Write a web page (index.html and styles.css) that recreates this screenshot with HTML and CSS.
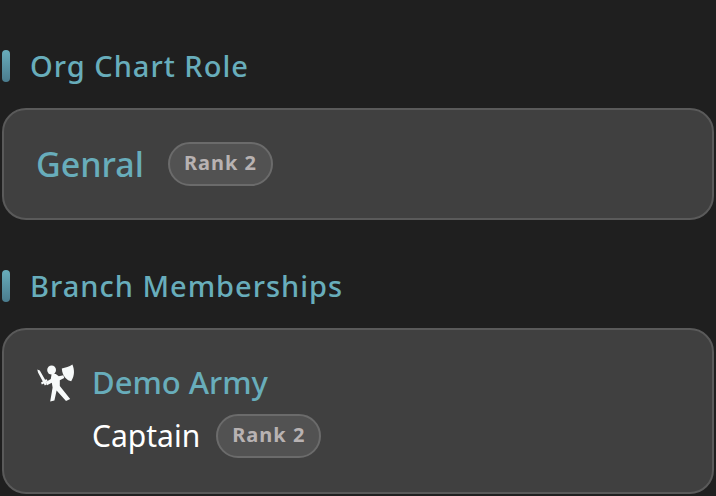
FILE: index.html
```
<!DOCTYPE html>
<html lang="en">
<head>
<meta charset="utf-8">
<meta name="viewport" content="width=device-width, initial-scale=1">
<title>Org Chart Role</title>
<link rel="stylesheet" href="styles.css">
</head>
<body>
<main class="profile">
  <section class="section">
    <h2 class="section-title">Org Chart Role</h2>
    <div class="card">
      <div class="role">
        <span class="role-name">Genral</span>
        <span class="rank">Rank 2</span>
      </div>
    </div>
  </section>
  <section class="section">
    <h2 class="section-title">Branch Memberships</h2>
    <div class="card branch">
      <svg class="branch-icon" viewBox="0 0 40 40" aria-hidden="true">
        <ellipse cx="15.6" cy="8" rx="4.4" ry="4.6"/>
        <path d="M1.3 7.4 3.8 8.6 9.1 17.8 10.8 17.2 11.6 19 9.8 20.2 10.8 22.2 8.8 23.4 7.8 21.6 5.8 22.4 5 20.6 6.8 19.4 2 10.4Z"/>
        <path d="M9.8 20 14.8 17 15.6 12 19.8 12 22.8 14.2 27.4 13.2 28.2 16 23.8 18.2 23.8 24 34.2 37 30 39 20.6 28.6 18.4 38.6 14.2 39.6 16.6 25.6 15.8 20.8 11 23.2Z"/>
        <path d="M25.8 6.4C29.6 6 33.2 4.8 36.4 2.6 38.6 8 38.8 13.6 35.2 19.2 31.4 18.4 26.4 14.8 25.8 6.4Z"/>
      </svg>
      <div class="branch-info">
        <h3 class="branch-name">Demo Army</h3>
        <div class="branch-role">
          <span class="branch-title">Captain</span>
          <span class="rank">Rank 2</span>
        </div>
      </div>
    </div>
  </section>
</main>
</body>
</html>
```
FILE: styles.css
```
* { box-sizing: border-box; }

body {
  margin: 0;
  background: #1f1f1f;
  color: #fff;
  font-family: "Segoe UI", "Noto Sans", "Open Sans", sans-serif;
}

.profile { padding: 48px 2px 2px; }

.section + .section { margin-top: 48px; }

.section-title {
  display: flex;
  align-items: center;
  gap: 20px;
  margin: 0 0 24px;
  color: #68adbb;
  font-size: 29px;
  font-weight: 500;
  line-height: 36px;
  letter-spacing: 1px;
}

.section-title::before {
  content: "";
  width: 8px;
  height: 32px;
  border-radius: 4px;
  background: linear-gradient(#68adbb, #4a7c8e);
}

.card {
  padding: 32px;
  border: 2px solid #5a5a5a;
  border-radius: 24px;
  background: #404040;
}

.role,
.branch-role {
  display: flex;
  align-items: center;
}

.role {
  gap: 24px;
}

.branch-role {
  gap: 16px;
}

.role-name {
  color: #68adbb;
  font-size: 34px;
  font-weight: 500;
  line-height: 42px;
}

.rank {
  padding: 0 14px 2px;
  border: 2px solid #6b6b6b;
  border-radius: 22px;
  background: #525252;
  color: #b8b2b2;
  font-size: 20px;
  font-weight: 700;
  line-height: 38px;
  letter-spacing: 1px;
}

.branch {
  display: flex;
  align-items: flex-start;
  gap: 16px;
}

.branch-icon {
  width: 40px;
  height: 40px;
  fill: #f7fafa;
}

.branch-info {
  padding-bottom: 2px;
}

.branch-name {
  margin: 0 0 12px;
  color: #68adbb;
  font-size: 31px;
  font-weight: 500;
  line-height: 40px;
}

.branch-title {
  font-size: 30px;
  line-height: 44px;
}
```
